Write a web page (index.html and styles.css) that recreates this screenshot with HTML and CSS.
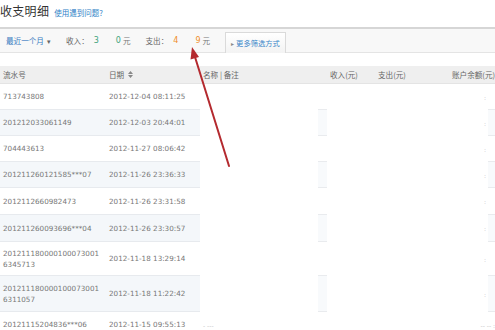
FILE: index.html
```html
<!DOCTYPE html>
<html lang="zh-CN">
<head>
<meta charset="utf-8">
<title>收支明细</title>
<link rel="stylesheet" href="styles.css">
</head>
<body>
<div class="page">
  <div class="title-bar">
    <h1 class="title">收支明细</h1>
    <a class="help" href="#">使用遇到问题?</a>
  </div>

  <div class="toolbar">
    <span class="range">最近一个月<span class="caret">▾</span></span>
    <span class="stat">
      <span class="label">收入：</span>
      <span class="count green">3</span>
      <span class="amount green">0</span><span class="unit">元</span>
    </span>
    <span class="stat">
      <span class="label">支出：</span>
      <span class="count orange">4</span>
      <span class="amount orange">9</span><span class="unit">元</span>
    </span>
    <span class="more-btn"><span class="tri">▸</span>更多筛选方式</span>
  </div>

  <div class="table">
    <div class="row head">
      <div class="cell">流水号</div>
      <div class="cell">日期
        <svg class="sort" width="5" height="7" viewBox="0 0 5 7"><path d="M2.5 0 L5 3 L0 3 Z M0 4 L5 4 L2.5 7 Z" fill="#888"/></svg>
      </div>
      <div class="cell">名称 | 备注</div>
      <div class="cell">收入(元)</div>
      <div class="cell">支出(元)</div>
      <div class="cell last">账户余额(元)</div>
    </div>

    <div class="row">
      <div class="cell id">713743808</div>
      <div class="cell date">2012-12-04 08:11:25</div>
      <div class="cell blank"><span class="stub"></span></div>
      <div class="cell blank"></div>
      <div class="cell blank"></div>
      <div class="cell blank end"><span class="faint">:</span><span class="stub small"></span></div>
    </div>
    <div class="row alt">
      <div class="cell id">201212033061149</div>
      <div class="cell date">2012-12-03 20:44:01</div>
      <div class="cell blank"><span class="stub"></span></div>
      <div class="cell blank"></div>
      <div class="cell blank"></div>
      <div class="cell blank end"><span class="faint">:</span><span class="stub small"></span></div>
    </div>
    <div class="row">
      <div class="cell id">704443613</div>
      <div class="cell date">2012-11-27 08:06:42</div>
      <div class="cell blank"><span class="stub"></span></div>
      <div class="cell blank"></div>
      <div class="cell blank"></div>
      <div class="cell blank end"><span class="faint">:</span><span class="stub small"></span></div>
    </div>
    <div class="row alt">
      <div class="cell id">201211260121585***07</div>
      <div class="cell date">2012-11-26 23:36:33</div>
      <div class="cell blank"><span class="stub"></span></div>
      <div class="cell blank"></div>
      <div class="cell blank"></div>
      <div class="cell blank end"><span class="faint">:</span><span class="stub small"></span></div>
    </div>
    <div class="row mid">
      <div class="cell id">2012112660982473</div>
      <div class="cell date">2012-11-26 23:31:58</div>
      <div class="cell blank"><span class="stub"></span></div>
      <div class="cell blank"></div>
      <div class="cell blank"></div>
      <div class="cell blank end"><span class="faint">:</span><span class="stub small"></span></div>
    </div>
    <div class="row alt mid">
      <div class="cell id">201211260093696***04</div>
      <div class="cell date">2012-11-26 23:30:57</div>
      <div class="cell blank"><span class="stub"></span></div>
      <div class="cell blank"></div>
      <div class="cell blank"></div>
      <div class="cell blank end"><span class="faint">:</span><span class="stub small"></span></div>
    </div>
    <div class="row tall">
      <div class="cell id">201211180000100073001<br>6345713</div>
      <div class="cell date">2012-11-18 13:29:14</div>
      <div class="cell blank"><span class="stub"></span></div>
      <div class="cell blank"></div>
      <div class="cell blank"></div>
      <div class="cell blank end"><span class="faint">:</span><span class="stub small"></span></div>
    </div>
    <div class="row alt tall">
      <div class="cell id">201211180000100073001<br>6311057</div>
      <div class="cell date">2012-11-18 11:22:42</div>
      <div class="cell blank"><span class="stub"></span></div>
      <div class="cell blank"></div>
      <div class="cell blank"></div>
      <div class="cell blank end"><span class="faint">:</span><span class="stub small"></span></div>
    </div>
    <div class="row">
      <div class="cell id">20121115204836***06</div>
      <div class="cell date">2012-11-15 09:55:13</div>
      <div class="cell blank"><span class="faint wide">- ---</span></div>
      <div class="cell blank"></div>
      <div class="cell blank"></div>
      <div class="cell blank end"><span class="faint">-- -- :</span></div>
    </div>
  </div>

  <svg class="annotation" width="495" height="330" viewBox="0 0 495 330">
    <line x1="229" y1="166" x2="195" y2="57" stroke="#b42a2f" stroke-width="2" stroke-linecap="round"/>
    <polygon points="192,47 199,57 190.5,59.5" fill="#b42a2f"/>
  </svg>
</div>
</body>
</html>
```

FILE: styles.css
```css
html, body {
  margin: 0;
  padding: 0;
  background: #fff;
}

body {
  font-family: "Noto Sans CJK SC", "Noto Sans", sans-serif;
  color: #555;
}

.page {
  position: relative;
  width: 495px;
  height: 330px;
  overflow: hidden;
}

/* title */
.title-bar {
  display: flex;
  align-items: baseline;
  height: 27px;
  box-sizing: border-box;
  padding-top: 3px;
}

.title {
  margin: 0;
  font-size: 12px;
  line-height: 16px;
  font-weight: normal;
  color: #333;
  letter-spacing: 0.3px;
}

.help {
  margin-left: 5px;
  font-size: 7.5px;
  color: #2f7fc7;
  text-decoration: none;
}

/* toolbar */
.toolbar {
  display: flex;
  align-items: center;
  gap: 15px;
  height: 26px;
  box-sizing: border-box;
  padding-left: 6px;
  border-top: 2px solid #d6d6d6;
  border-bottom: 1px solid #e4e4e4;
  background: #f8f8f8;
  font-size: 7.6px;
  position: relative;
}

.range {
  color: #3579c0;
}

.caret {
  margin-left: 3px;
  color: #666;
  font-size: 7px;
}

.stat {
  display: flex;
  align-items: center;
  color: #666;
}

.count, .amount {
  font-family: "DejaVu Sans", sans-serif;
  font-size: 8px;
}

.count {
  margin-left: 5px;
}

.amount {
  margin-left: 17px;
  margin-right: 2px;
}

.green { color: #3ea37c; }
.orange { color: #ef8f2b; }

.unit { color: #777; }

.more-btn {
  align-self: flex-end;
  height: 21px;
  box-sizing: border-box;
  margin-bottom: -1px;
  padding: 0 5px 0 5px;
  display: flex;
  align-items: center;
  border: 1px solid #dadada;
  border-bottom: none;
  background: linear-gradient(#ffffff, #f3f3f3);
  color: #3a86c8;
  font-size: 7.3px;
}

.tri {
  color: #888;
  font-size: 6px;
  margin-right: 2px;
}

/* table */
.table {
  margin-top: 13px;
}

.row {
  display: grid;
  grid-template-columns: 106px 94px 127px 48px 75px 45px;
  height: 26px;
}

.row.mid {
  height: 27px;
}

.row.tall {
  height: 34px;
}

.row.tall + .row.tall {
  height: 36px;
}

.row.head {
  height: 17px;
  background: #efefef;
  border-bottom: 1px solid #e4e4e4;
  font-size: 7.6px;
  color: #666;
}

.cell {
  display: flex;
  align-items: center;
  padding-left: 3px;
  white-space: nowrap;
  overflow: hidden;
}

.head .cell.last {
  padding-left: 2px;
}

.sort {
  margin-left: 4px;
}

.id, .date {
  font-family: "DejaVu Sans", sans-serif;
  font-size: 7.2px;
  line-height: 11px;
  color: #777;
  border-bottom: 1px solid #e7eaee;
}

.alt .id, .alt .date {
  background: #f4f7fa;
}

.blank {
  padding-left: 0;
}

.stub {
  margin-left: auto;
  width: 9px;
  height: 100%;
  box-sizing: border-box;
  border-bottom: 1px solid #e9ebee;
}

.alt .stub {
  background: #f8fafc;
}

.stub.small {
  width: 7px;
  margin-left: 2px;
}

.end {
  justify-content: flex-end;
}

.faint {
  color: #c4c4c4;
  font-family: "DejaVu Sans", sans-serif;
  font-size: 6px;
}

.faint.wide {
  margin-left: 3px;
}

.annotation {
  position: absolute;
  left: 0;
  top: 0;
  pointer-events: none;
}
```
